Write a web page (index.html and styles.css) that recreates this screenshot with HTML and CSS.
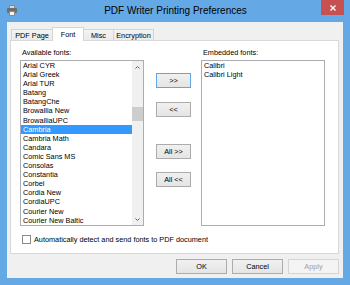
FILE: index.html
```html
<!DOCTYPE html>
<html>
<head>
<meta charset="utf-8">
<link rel="stylesheet" href="styles.css">
</head>
<body>
<div class="window">
  <div class="titlebar">
    <svg class="app-icon" width="10" height="11" viewBox="0 0 10 11">
      <rect x="2.5" y="0.5" width="5" height="3" fill="#d8d8d8" stroke="#8a8a8a"/>
      <rect x="0" y="3" width="10" height="5" rx="1" fill="#6e6e6e"/>
      <rect x="2.5" y="6.5" width="5" height="4" fill="#f4f4f4" stroke="#8a8a8a"/>
    </svg>
    <div class="title">PDF Writer Printing Preferences</div>
    <div class="close">
      <svg width="6" height="6" viewBox="0 0 6 6"><path d="M0.5 0.5 L5.5 5.5 M5.5 0.5 L0.5 5.5" stroke="#fff" stroke-width="1.3"/></svg>
    </div>
  </div>
  <div class="client">
    <div class="tabs">
      <div class="tab tab-page">PDF Page</div>
      <div class="tab tab-font active">Font</div>
      <div class="tab tab-misc">Misc</div>
      <div class="tab tab-enc">Encryption</div>
    </div>
    <div class="panel">
      <div class="font-grid">
        <div class="label">Available fonts:</div>
        <div></div>
        <div class="label">Embedded fonts:</div>
        <div class="list">
          <ul class="items">
            <li>Arial CYR</li>
            <li>Arial Greek</li>
            <li>Arial TUR</li>
            <li>Batang</li>
            <li>BatangChe</li>
            <li>Browallia New</li>
            <li>BrowalliaUPC</li>
            <li class="selected">Cambria</li>
            <li>Cambria Math</li>
            <li>Candara</li>
            <li>Comic Sans MS</li>
            <li>Consolas</li>
            <li>Constantia</li>
            <li>Corbel</li>
            <li>Cordia New</li>
            <li>CordiaUPC</li>
            <li>Courier New</li>
            <li>Courier New Baltic</li>
          </ul>
          <div class="scrollbar">
            <div class="arrow">
              <svg width="5" height="3" viewBox="0 0 5 3"><path d="M0.5 2.5 L2.5 0.5 L4.5 2.5" fill="none" stroke="#606060" stroke-width="1"/></svg>
            </div>
            <div class="thumb"></div>
            <div class="arrow arrow-down">
              <svg width="5" height="3" viewBox="0 0 5 3"><path d="M0.5 0.5 L2.5 2.5 L4.5 0.5" fill="none" stroke="#606060" stroke-width="1"/></svg>
            </div>
          </div>
        </div>
        <div class="mid">
          <button class="btn small default">&gt;&gt;</button>
          <button class="btn small b2">&lt;&lt;</button>
          <button class="btn small b3">All &gt;&gt;</button>
          <button class="btn small b4">All &lt;&lt;</button>
        </div>
        <div class="list">
          <ul class="items">
            <li>Calibri</li>
            <li>Calibri Light</li>
          </ul>
        </div>
      </div>
      <label class="check"><span class="box"></span><span>Automatically detect and send fonts to PDF document</span></label>
    </div>
    <div class="actions">
      <button class="btn wide">OK</button>
      <button class="btn wide">Cancel</button>
      <button class="btn wide disabled">Apply</button>
    </div>
  </div>
</div>
</body>
</html>
```
FILE: styles.css
```css
* { box-sizing: border-box; }
html, body { margin: 0; padding: 0; }
body {
  width: 350px;
  height: 285px;
  overflow: hidden;
  background: #64a9e6;
  font-family: "Liberation Sans", Arial, sans-serif;
  font-size: 7.3px;
  color: #000;
}
.window {
  display: flex;
  flex-direction: column;
  height: 285px;
}
.titlebar {
  height: 22px;
  flex: none;
  display: grid;
  grid-template-columns: 1fr auto 1fr;
  align-items: start;
  padding: 0 6px 0 7px;
}
.app-icon { margin-top: 5px; }
.title {
  font-size: 10px;
  line-height: 22px;
  color: #000;
  white-space: nowrap;
}
.close {
  justify-self: end;
  width: 23px;
  height: 15px;
  background: #c75050;
  display: flex;
  align-items: center;
  justify-content: center;
}
.close svg { display: block; }
.client {
  flex: 1;
  margin: 0 7px 7px;
  background: #f0f0f0;
  padding: 5px 4px 0 3px;
  display: flex;
  flex-direction: column;
}
.tabs {
  display: flex;
  align-items: flex-end;
  height: 13px;
  padding-left: 1px;
  position: relative;
  z-index: 1;
}
.tab {
  height: 11px;
  border: 1px solid #d4d4d4;
  border-bottom: none;
  background: linear-gradient(#f3f3f3, #ebebeb);
  display: flex;
  align-items: center;
  justify-content: center;
  margin-right: -1px;
  white-space: nowrap;
}
.tab.active {
  height: 14px;
  margin-bottom: -1px;
  background: #fff;
  position: relative;
  z-index: 2;
}
.tab-page { width: 42px; }
.tab-font { width: 32px; }
.tab-misc { width: 31px; }
.tab-enc { width: 41px; }
.panel {
  height: 214px;
  border: 1px solid #d9d9d9;
  background: #fff;
  padding: 7px 0 0 9px;
}
.font-grid {
  display: grid;
  grid-template-columns: 124px 57px 124px;
}
.label {
  height: 9px;
  line-height: 9px;
  margin: 0 0 3px 2px;
  white-space: nowrap;
}
.list {
  height: 166px;
  border: 1px solid #abadb3;
  background: #fff;
  display: flex;
}
.items {
  flex: 1;
  list-style: none;
  margin: 0;
  padding: 0;
  min-width: 0;
}
.items li {
  height: 9.1px;
  line-height: 9.1px;
  padding-left: 2px;
  white-space: nowrap;
}
.items li.selected {
  background: #3399ff;
  color: #fff;
}
.scrollbar {
  width: 11px;
  background: #f0f0f0;
  display: flex;
  flex-direction: column;
}
.arrow {
  height: 12px;
  display: flex;
  align-items: center;
  justify-content: center;
}
.arrow svg { display: block; }
.thumb {
  margin: 34px 0 0 0;
  height: 14px;
  background: #cdcdcd;
}
.arrow-down { margin-top: auto; }
.mid {
  display: flex;
  flex-direction: column;
  align-items: flex-start;
  padding: 13px 0 0 12px;
}
.btn {
  font: inherit;
  color: #000;
  margin: 0;
  padding: 0;
  border: 1px solid #acacac;
  background: linear-gradient(#f0f0f0, #e5e5e5);
  display: flex;
  align-items: center;
  justify-content: center;
  white-space: nowrap;
}
.btn.small { width: 35px; height: 15px; }
.btn.default { border-color: #5fa6e8; }
.b2 { margin-top: 14px; }
.b3 { margin-top: 27px; }
.b4 { margin-top: 13px; }
.check {
  display: flex;
  align-items: center;
  gap: 3px;
  margin: 9px 0 0 2px;
  height: 9px;
  white-space: nowrap;
}
.box {
  width: 9px;
  height: 9px;
  border: 1px solid #8a8a8a;
  background: #fff;
  flex: none;
}
.actions {
  display: flex;
  justify-content: flex-end;
  gap: 5px;
  margin-top: 5px;
}
.btn.wide { width: 51px; height: 15px; }
.btn.disabled {
  color: #a0a0a0;
  border-color: #d5d5d5;
  background: #f4f4f4;
}
```
